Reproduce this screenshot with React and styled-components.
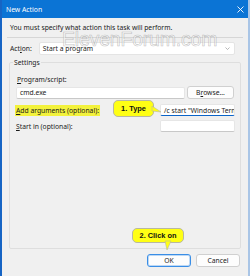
import React from "react";
import styled, { createGlobalStyle } from "styled-components";

const GlobalStyle = createGlobalStyle`
  html, body { margin: 0; padding: 0; background: #f0f0f0; }
  body { font-family: "Noto Sans", "Open Sans", sans-serif; }
`;

// ── Window frame ────────────────────────────────────────────────────────────

const Window = styled.div`
  position: relative;
  width: 250px;
  height: 276px;
  box-sizing: border-box;
  display: flex;
  flex-direction: column;
  background: #f0f0f0;
  border-left: 2px solid #1664c4;
  border-right: 2px solid #a9c5e6;
  overflow: hidden;
  color: #1a1a1a;
  font-size: 6.75px;
  line-height: 9px;
`;

const TitleBar = styled.div`
  height: 18px;
  margin: 0 -2px;
  padding: 0 6px 0 6px;
  display: flex;
  align-items: center;
  justify-content: space-between;
  background: #0b74d5;
  color: #fff;
  font-size: 6.8px;
`;

const Body = styled.div`
  flex: 1;
  display: flex;
  flex-direction: column;
  padding: 5px 5px 0 5px;
`;

const Intro = styled.div`
  padding-left: 3px;
  line-height: 10px;
`;

const Separator = styled.div`
  height: 1px;
  margin: 4px 0 0;
  background: #d6d6d6;
`;

const ActionRow = styled.div`
  display: flex;
  align-items: center;
  margin-top: 4px;
  padding-left: 3px;
  gap: 7px;
`;

const Select = styled.div`
  flex: 1;
  height: 13px;
  margin-right: 8px;
  box-sizing: border-box;
  display: flex;
  align-items: center;
  justify-content: space-between;
  padding: 0 4px 0 3px;
  background: #fff;
  border: 1px solid #e4e4e4;
  border-radius: 2px;
`;

// ── Settings group ─────────────────────────────────────────────────────────

const Group = styled.fieldset`
  flex: 1;
  margin: 3px 2px 0 2px;
  padding: 0 5px 0 6px;
  border: 1px solid #dedede;
  border-radius: 2px;
  display: flex;
  flex-direction: column;
`;

const Legend = styled.legend`
  margin-left: -3px;
  padding: 0 1px;
  line-height: 9px;
`;

const FieldLabel = styled.div`
  margin: 8px 0 0 1px;
`;

const Row = styled.div`
  display: flex;
  align-items: center;
  justify-content: space-between;
  margin-top: ${({ $mt }) => $mt || 0}px;
`;

const Input = styled.div`
  width: ${({ $w }) => $w}px;
  height: 12px;
  box-sizing: border-box;
  display: flex;
  align-items: center;
  padding-left: 3px;
  background: #fff;
  border: 1px solid #e6e6e6;
  border-bottom: ${({ $focus }) => ($focus ? "1px solid #0a64c8" : "1px solid #c8c8c8")};
  border-radius: 2px;
  white-space: nowrap;
  overflow: hidden;
`;

const Button = styled.div`
  width: ${({ $w }) => $w}px;
  height: 13px;
  box-sizing: border-box;
  display: flex;
  align-items: center;
  justify-content: center;
  background: #fdfdfd;
  border: 1px solid ${({ $primary }) => ($primary ? "#3a8ee6" : "#d0d0d0")};
  box-shadow: ${({ $primary }) => ($primary ? "inset 0 0 0 1px #bcd8f5" : "none")};
  border-radius: 3px;
`;

const Highlight = styled.span`
  display: inline-block;
  padding: 1px 1px;
  margin-left: -1px;
  background: #f3f23c;
`;

const Footer = styled.div`
  display: flex;
  justify-content: flex-end;
  gap: 5px;
  margin: 5px 3px 9px 0;
`;

// ── Overlays: watermark and callouts ───────────────────────────────────────

const Watermark = styled.div`
  position: absolute;
  left: 60px;
  top: 30px;
  font-family: "Liberation Sans", Arial, sans-serif;
  font-size: 19.5px;
  line-height: 1;
  letter-spacing: -0.2px;
  color: rgba(255, 255, 255, 0.55);
  -webkit-text-stroke: 0.6px rgba(140, 140, 140, 0.55);
  pointer-events: none;
`;

const Callout = styled.div`
  position: absolute;
  left: ${({ $x }) => $x}px;
  top: ${({ $y }) => $y}px;
  width: ${({ $w }) => $w}px;
  height: ${({ $h }) => $h}px;
  box-sizing: border-box;
  display: flex;
  align-items: center;
  justify-content: center;
  background: #ffff14;
  border: 1px solid #b8b8a0;
  border-radius: 5px;
  font-family: "Liberation Sans", Arial, sans-serif;
  font-weight: bold;
  font-size: 7.4px;
  color: #111;
`;

const Pointer = styled.svg`
  position: absolute;
  overflow: visible;
`;

const U = styled.span`
  text-decoration: underline;
`;

export default function App() {
  return (
    <>
      <GlobalStyle />
      <Window>
        <TitleBar>
          <span>New Action</span>
          <svg width="7" height="7" viewBox="0 0 7 7">
            <path d="M0.5 0.5 L6.5 6.5 M6.5 0.5 L0.5 6.5" stroke="#fff" strokeWidth="0.9" />
          </svg>
        </TitleBar>
        <Body>
          <Intro>You must specify what action this task will perform.</Intro>
          <Separator />
          <ActionRow>
            <span>
              Act<U>i</U>on:
            </span>
            <Select>
              <span>Start a program</span>
              <svg width="5" height="3" viewBox="0 0 5 3">
                <path d="M0.5 0.5 L2.5 2.5 L4.5 0.5" stroke="#9a9a9a" strokeWidth="0.7" fill="none" />
              </svg>
            </Select>
          </ActionRow>
          <Group>
            <Legend>Settings</Legend>
            <FieldLabel>
              <U>P</U>rogram/script:
            </FieldLabel>
            <Row $mt={2}>
              <Input $w={169}>cmd.exe</Input>
              <Button $w={47} style={{ marginRight: 1 }}>
                <span>
                  B<U>r</U>owse...
                </span>
              </Button>
            </Row>
            <Row $mt={5}>
              <Highlight>
                <U>A</U>dd arguments (optional):
              </Highlight>
              <Input $w={75} $focus>
                /c start "Windows Termin
              </Input>
            </Row>
            <Row $mt={4}>
              <span>
                <U>S</U>tart in (optional):
              </span>
              <Input $w={75} />
            </Row>
          </Group>
          <Footer>
            <Button $w={44} $primary>OK</Button>
            <Button $w={44}>Cancel</Button>
          </Footer>
        </Body>

        <Watermark>ElevenForum.com</Watermark>

        <Callout $x={111} $y={100} $w={41} $h={17}>1. Type</Callout>
        <Pointer width="10" height="8" style={{ left: 150, top: 106 }}>
          <path d="M0 0 L9 6 L0 5 Z" fill="#ffff14" stroke="#b8b8a0" strokeWidth="0.6" />
        </Pointer>

        <Callout $x={130} $y={228} $w={52} $h={15}>2. Click on</Callout>
        <Pointer width="8" height="10" style={{ left: 162, top: 241 }}>
          <path d="M1 0 L3 9 L7 0 Z" fill="#ffff14" stroke="#b8b8a0" strokeWidth="0.6" />
        </Pointer>
      </Window>
    </>
  );
}
